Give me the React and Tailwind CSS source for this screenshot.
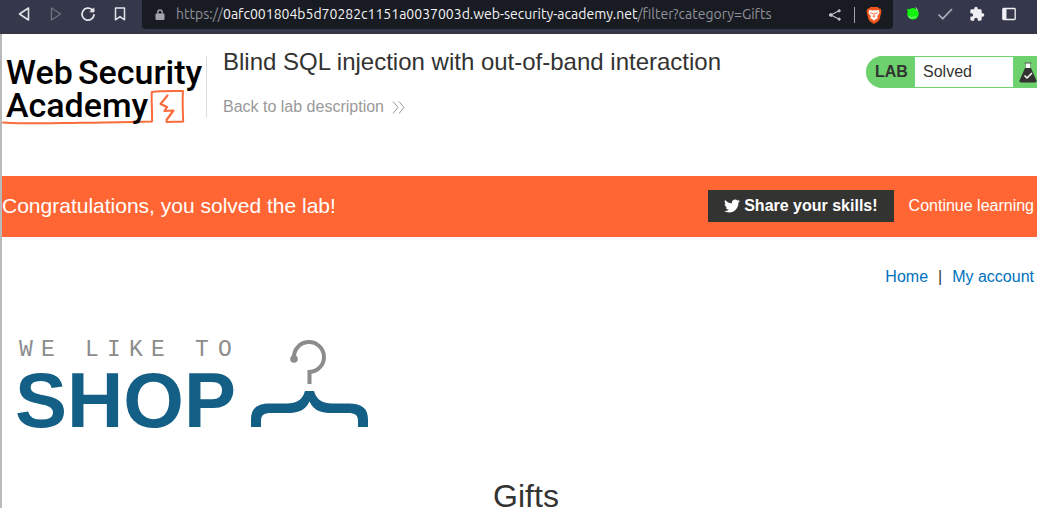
import React from "react";
import { FaTwitter } from "react-icons/fa";

function IconButton({ label, children }) {
  return (
    <button type="button" aria-label={label} className="flex h-6 w-8 items-center justify-center">
      {children}
    </button>
  );
}

function BrowserBar() {
  return (
    <nav className="flex h-[34px] items-start border-b-2 border-[#3b3445] bg-[#35374a] text-[#e3e4ea]">
      <div className="flex h-7 w-[142px] shrink-0 items-center pl-2">
        <IconButton label="Back">
          <svg width="14" height="16" viewBox="0 0 14 16" fill="none" stroke="currentColor" strokeWidth="1.6" strokeLinejoin="round">
            <path d="M11.5 2v12L2.5 8z" />
          </svg>
        </IconButton>
        <IconButton label="Forward">
          <svg width="14" height="16" viewBox="0 0 14 16" fill="none" stroke="#6f717f" strokeWidth="1.4" strokeLinejoin="round">
            <path d="M2.5 2v12l9-6z" />
          </svg>
        </IconButton>
        <IconButton label="Reload">
          <svg width="16" height="16" viewBox="0 0 16 16" fill="none" stroke="currentColor" strokeWidth="1.8" strokeLinecap="round">
            <path d="M12 3.6A6 6 0 1 0 14 9" />
            <circle cx="12.6" cy="4.4" r="1.9" fill="currentColor" stroke="none" />
            <path d="M13.8 2.2v3.6H10" strokeWidth="1" />
          </svg>
        </IconButton>
        <IconButton label="Bookmark">
          <svg width="12" height="16" viewBox="0 0 12 16" fill="none" stroke="currentColor" strokeWidth="1.5" strokeLinejoin="round">
            <path d="M1.5 2h9v11.8L6 10.6l-4.5 3.2z" />
          </svg>
        </IconButton>
      </div>
      <div className="flex h-[29px] min-w-0 grow items-center rounded-b bg-[#191b22] pl-3 pr-2.5">
        <svg width="12" height="14" viewBox="0 0 12 14" className="shrink-0 text-[#a3a4ab]">
          <rect x="1.5" y="5.5" width="9" height="6.5" rx="1" fill="currentColor" />
          <path d="M3.8 6V4.2a2.2 2.2 0 0 1 4.4 0V6" fill="none" stroke="currentColor" strokeWidth="1.3" />
        </svg>
        <p className="ml-2.5 grow whitespace-nowrap pb-px font-['Ubuntu','Noto_Sans',sans-serif] text-[14px] leading-7 text-[#90929b]">
          https://<span className="text-[#f4f4f6]">0afc001804b5d70282c1151a0037003d.web-security-academy.net</span>/filter?category=Gifts
        </p>
        <button type="button" aria-label="Share" className="mr-3">
          <svg width="14" height="14" viewBox="0 0 14 14" fill="#c3c4ca" stroke="#c3c4ca">
            <path d="M11.2 2.8 2.8 7l8.4 4.2" fill="none" strokeWidth="1.1" />
            <circle cx="2.8" cy="7" r="1.4" />
            <circle cx="11.2" cy="2.8" r="1.1" />
            <circle cx="11.2" cy="11.2" r="1.1" />
          </svg>
        </button>
        <span className="mr-2.5 h-4 w-px bg-[#a5a6ad]" />
        <button type="button" aria-label="Shields">
          <svg width="18" height="18" viewBox="0 0 18 20">
            <path d="M5 1h8l1.6 1.8 2 .2.6 3.6-2 8.2-1.8 2.4L9 20l-4.400-2.800-1.800-2.400-2-8.200.6-3.600 2-.2z" fill="#f1551c" />
            <path d="M4 4.200 7 5l2-.4 2 .4 3-.8 1.200 3.200-2.700 4.100.7 2-3 1.500L9 16.800 7.800 15l-3-1.500.7-2L2.800 7.400z" fill="#fff" />
            <path d="m4.800 7.400 3 1.200M13.200 7.400l-3 1.200M9 7.500v4M7.400 11.200 9 12.500l1.600-1.300" fill="none" stroke="#f1551c" strokeWidth="1" />
          </svg>
        </button>
      </div>
      <div className="flex h-7 w-[144px] shrink-0 items-center pl-1">
        <IconButton label="Proxy">
          <svg width="16" height="16" viewBox="0 0 16 16">
            <circle cx="8" cy="7.800" r="5.800" fill="#14f30f" />
            <path d="M2.500 2.800 5 3.500 4 5.500 2 5z" fill="#14f30f" />
            <path d="M10.500 1.500c1.500 1 1.800 2 1.600 3.400M3.500 10.500c2.500 2 5.500 1.500 7.500-.2" fill="none" stroke="#d6ffd2" strokeWidth=".8" />
          </svg>
        </IconButton>
        <IconButton label="Checker">
          <svg width="18" height="16" viewBox="0 0 18 16" fill="none" stroke="#a9abb7" strokeWidth="1.7">
            <path d="m2.500 8.500 4.200 4.200L16 3" />
          </svg>
        </IconButton>
        <IconButton label="Extensions">
          <svg width="16" height="16" viewBox="0 0 24 24" fill="#f0f0f4">
            <path d="M20.500 11H19V7a2 2 0 0 0-2-2h-4V3.500a2.500 2.500 0 0 0-5 0V5H4a2 2 0 0 0-2 2v3.800h1.500a2.700 2.700 0 0 1 0 5.400H2V20a2 2 0 0 0 2 2h3.800v-1.500a2.700 2.700 0 0 1 5.400 0V22H17a2 2 0 0 0 2-2v-4h1.500a2.500 2.500 0 0 0 0-5z" />
          </svg>
        </IconButton>
        <IconButton label="Side panel">
          <svg width="16" height="14" viewBox="0 0 16 14">
            <rect x="1.800" y="1.500" width="12.400" height="11" rx=".8" fill="none" stroke="#f0f0f4" strokeWidth="1.300" />
            <path d="M2 2h3.500v10H2z" fill="#f0f0f4" />
          </svg>
        </IconButton>
      </div>
    </nav>
  );
}

function AcademyLogo() {
  return (
    <a href="#academy" aria-label="Web Security Academy" className="block shrink-0">
      <svg width="204" height="80" viewBox="0 0 204 80">
        <g fill="none" stroke="#f96c3c" strokeLinejoin="round" strokeLinecap="round">
          <path d="M1 70.500c30 1.800 55 .5 80 .3s45-.8 69-1.300c.5-8-.8-20-.2-29.500 9-1.200 20-.8 31.200-1-.8 9-.2 20 .2 30.500-5 .6-11-.2-16.700.5" strokeWidth="2" />
          <path d="m165.500 43.500-7 8.500 6.500 3-2.500 4 9-.5-7 9.500" strokeWidth="2.200" />
        </g>
        <g fill="#000" fontFamily="Roboto, sans-serif" fontWeight="500" fontSize="34">
          <text x="4" y="32">Web</text>
          <text x="76" y="32">Security</text>
          <text x="4" y="65">Academy</text>
        </g>
      </svg>
    </a>
  );
}

function LabStatus() {
  return (
    <div className="flex h-8 shrink-0 items-center rounded-l-full border-y border-[#6dd26d] bg-[#6dd26d] text-base text-[#333332]">
      <span className="w-[49px] pl-[9px] font-bold">LAB</span>
      <p className="flex h-[30px] w-[98px] items-center bg-white pl-2">Solved</p>
      <svg width="24" height="28" viewBox="0 0 24 28">
        <path d="M12 10h6l5.500 12.500q.5 2-1.500 2H8q-2 0-1.500-2z" fill="#333332" />
        <path d="M12.500 5h5v5h-5z" fill="#fff" />
        <path d="M12.500 5v5M17.500 5v5" stroke="#77a877" strokeWidth="1" />
        <path d="M11.500 5h7" stroke="#555" strokeWidth="1" />
        <path d="m11.500 17.500 2.500 2.500 5-5" fill="none" stroke="#fff" strokeWidth="1.500" />
      </svg>
    </div>
  );
}

function ShopLogo() {
  return (
    <svg width="370" height="100" viewBox="0 0 370 100" role="img" aria-label="We like to shop" className="block">
      <text x="17 39 61 83 105 127 149 171 193 216" y="26" fill="#8c8c8c" fontFamily="'Liberation Mono', monospace" fontSize="23">
        WE LIKE TO
      </text>
      <text x="13" y="97" fill="#145f85" fontFamily="'Liberation Sans', sans-serif" fontWeight="700" fontSize="78">
        SHOP
      </text>
      <path d="M292 28a15 15 0 1 1 15.500 14v12" fill="none" stroke="#8c8c8c" strokeWidth="4" />
      <circle cx="292" cy="29" r="3.800" fill="#8c8c8c" />
      <path d="M303 61h9c3 10 9 12 18 12.500h17c13 0 19 5 19 16V97h-10v-6c0-6-3-8-10-8h-16c-11 0-18-2-22.500-11.500C303 81 296 83 285 83h-16c-7 0-10 2-10 8v6h-10v-7.500c0-11 6-16 19-16h17c9-.5 15-2.500 18-12.500z" fill="#145f85" />
    </svg>
  );
}

export default function App() {
  return (
    <div className="min-h-screen bg-white font-['Liberation_Sans',Arial,sans-serif] text-[#333332]">
      <BrowserBar />
      <div className="border-l-2 border-[#b9b9b9]">
        <header className="flex h-[142px] items-start pt-[22px]">
          <div className="-mt-1 shrink-0">
            <AcademyLogo />
          </div>
          <div className="h-[62px] w-px bg-[#dedede]" />
          <div className="grow pl-4">
            <h1 className="-mt-2 text-2xl leading-7">Blind SQL injection with out-of-band interaction</h1>
            <a href="#description" className="mt-[19px] flex items-center gap-2 text-base leading-6 text-[#999999]">
              Back to lab description
              <svg width="13" height="13" viewBox="0 0 13 13" fill="none" stroke="#999" strokeWidth="1">
                <path d="m1 .5 5 6-5 6M7 .5l5 6-5 6" />
              </svg>
            </a>
          </div>
          <LabStatus />
        </header>
        <section className="flex h-[61px] items-center bg-[#ff6633] pb-0.5 text-white">
          <h2 className="grow text-[21px] leading-6">Congratulations, you solved the lab!</h2>
          <button type="button" className="mr-[15px] flex h-8 items-center gap-1 bg-[#333332] px-4 text-base font-bold">
            <FaTwitter className="h-4 w-4" />
            Share your skills!
          </button>
          <a href="#learning" className="mr-[3px] text-base">Continue learning</a>
        </section>
        <nav className="mr-[3px] mt-[30px] flex justify-end gap-2.5 text-base leading-5 text-[#0071bd]">
          <a href="#home">Home</a>
          <span className="text-[#333332]">|</span>
          <a href="#account">My account</a>
        </nav>
        <main>
          <div className="mt-[43px]">
            <ShopLogo />
          </div>
          <h2 className="mt-12 pl-[13px] text-center text-[32px] leading-9">Gifts</h2>
        </main>
      </div>
    </div>
  );
}
